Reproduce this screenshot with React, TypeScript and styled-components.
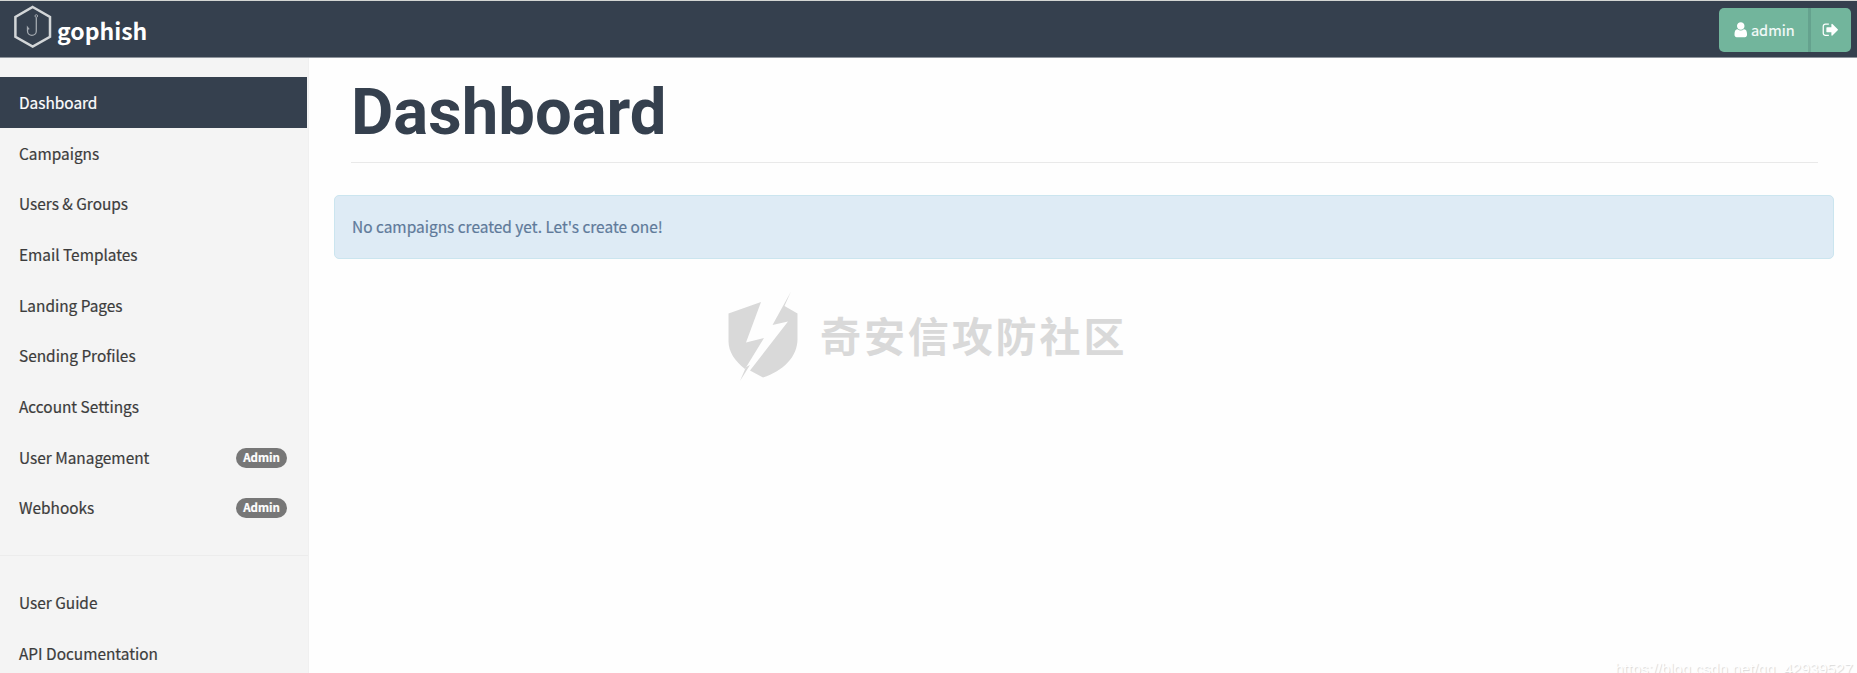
import React from "react";
import styled, { createGlobalStyle } from "styled-components";

const navy = "#35404e";
const sans = `"Noto Sans CJK SC", "Open Sans", sans-serif`;

const GlobalStyle = createGlobalStyle`
  *, *::before, *::after { box-sizing: border-box; }
  html, body, #root { margin: 0; height: 100%; }
  body { background: #fefefe; font-family: ${sans}; overflow: hidden; }
`;

const Page = styled.div`
  position: relative;
  display: flex;
  flex-direction: column;
  height: 673px;
  overflow: hidden;
`;

const Navbar = styled.header`
  flex: none;
  display: flex;
  justify-content: space-between;
  height: 58px;
  padding: 0 6px 0 14px;
  background: ${navy};
  border-top: 1px solid #d3d6d3;
  border-bottom: 1px solid #8e949c;
`;

const Brand = styled.a`
  display: flex;
  color: #fff;
  text-decoration: none;
`;

const Logo = styled.svg`
  display: block;
  width: 38px;
  height: 46px;
  margin-top: 3px;
`;

const BrandName = styled.span`
  margin: 11px 0 0 5px;
  font-size: 23px;
  font-weight: 700;
  line-height: 36px;
`;

const ButtonGroup = styled.div`
  display: flex;
  height: 44px;
  margin-top: 7px;
  border-radius: 5px;
  overflow: hidden;
`;

const NavButton = styled.button<{ $width: number; $divided?: boolean }>`
  display: flex;
  align-items: center;
  justify-content: center;
  gap: 1px;
  width: ${(p) => p.$width}px;
  padding: 0;
  border: 0;
  border-right: ${(p) => (p.$divided ? "3px solid #65a28e" : "0")};
  background: #72b59c;
  color: #f5fbfa;
  font-family: ${sans};
  font-size: 14.6px;
  line-height: 20px;
  -webkit-text-stroke: 0.2px currentColor;
`;

const Glyph = styled.svg`
  display: block;
  width: 17.5px;
  height: 17.5px;
  fill: #fff;
`;

const Body = styled.div`
  flex: 1;
  display: flex;
  min-height: 0;
`;

const Sidebar = styled.nav`
  flex: none;
  width: 309px;
  padding-top: 19px;
  background: #f4f4f4;
  border-right: 1px solid #f0f0f0;
`;

const NavItem = styled.a<{ $active?: boolean }>`
  display: flex;
  align-items: center;
  justify-content: space-between;
  height: 50.7px;
  margin-right: 1px;
  padding: 0 20px 1px 19px;
  background: ${(p) => (p.$active ? navy : "transparent")};
  color: ${(p) => (p.$active ? "#fff" : "#3c3c3c")};
  font-size: 15.4px;
  line-height: 24px;
  text-decoration: none;
  -webkit-text-stroke: 0.2px currentColor;
`;

const Badge = styled.span`
  width: 51px;
  height: 20px;
  margin-top: 2px;
  border-radius: 10px;
  background: #777;
  color: #fff;
  font-size: 11.5px;
  font-weight: 700;
  line-height: 19px;
  text-align: center;
`;

const Divider = styled.hr`
  height: 1px;
  margin: 22px 0 21px;
  border: 0;
  background: #ececec;
`;

const Main = styled.main`
  flex: 1;
  padding: 0 23px 0 25px;
`;

const Title = styled.h1`
  height: 105px;
  margin: 0 16px 32px 17px;
  padding-top: 16px;
  border-bottom: 1px solid #e9e9e9;
  color: ${navy};
  font-family: Roboto, sans-serif;
  font-size: 65.2px;
  font-weight: 700;
  line-height: 76px;
`;

const Alert = styled.div`
  height: 64px;
  padding: 0 17px;
  border: 1px solid #cbe5ef;
  border-radius: 5px;
  background: #deebf5;
  color: #5f7a9a;
  font-size: 15.45px;
  line-height: 61px;
  -webkit-text-stroke: 0.2px currentColor;
`;

const Watermark = styled.div`
  position: absolute;
  left: 728px;
  top: 291px;
  display: flex;
  align-items: center;
  color: #d9d9d9;
  pointer-events: none;
`;

const Shield = styled.svg`
  display: block;
  width: 70px;
  height: 90px;
  fill: currentColor;
`;

const WatermarkText = styled.span`
  margin: 0 0 4px 22px;
  font-size: 41px;
  font-weight: 700;
  line-height: 60px;
  letter-spacing: 2.9px;
  white-space: nowrap;
`;

const SourceUrl = styled.span`
  position: absolute;
  left: 1615px;
  top: 660px;
  color: #fff;
  font-family: "Liberation Sans", sans-serif;
  font-size: 15.5px;
  line-height: 18px;
  text-shadow: 1px 1px 1px #d8d8d8;
  white-space: nowrap;
`;

const links = [
  { label: "Dashboard", active: true },
  { label: "Campaigns" },
  { label: "Users & Groups" },
  { label: "Email Templates" },
  { label: "Landing Pages" },
  { label: "Sending Profiles" },
  { label: "Account Settings" },
  { label: "User Management", badge: "Admin" },
  { label: "Webhooks", badge: "Admin" },
];

const userPath =
  "M1536 1399q0 109-62.5 187t-150.5 78h-854q-88 0-150.5-78t-62.5-187q0-85 8.5-160.5t31.5-152 58.5-131 94-89 134.5-34.5q131 128 313 128t313-128q76 0 134.5 34.5t94 89 58.5 131 31.5 152 8.5 160.5zm-256-887q0 159-112.5 271.5t-271.5 112.5-271.5-112.5-112.5-271.5 112.5-271.5 271.5-112.5 271.5 112.5 112.5 271.5z";
const signOutPath =
  "M704 1440q0 4 1 20t.5 26.5-3 23.5-10 19.5-20.5 6.5h-320q-119 0-203.5-84.5t-84.5-203.5v-704q0-119 84.5-203.5t203.5-84.5h320q13 0 22.5 9.5t9.5 22.5q0 4 1 20t.5 26.5-3 23.5-10 19.5-20.5 6.5h-320q-66 0-113 47t-47 113v704q0 66 47 113t113 47h312l11.5 1 11.5 3 8 5.5 7 9 2 13.5zm928-544q0 26-19 45l-544 544q-19 19-45 19t-45-19-19-45v-288h-448q-26 0-45-19t-19-45v-384q0-26 19-45t45-19h448v-288q0-26 19-45t45-19 45 19l544 544q19 19 19 45z";

export default function App() {
  return (
    <Page>
      <GlobalStyle />
      <Navbar>
        <Brand>
          <Logo viewBox="14 4 38 46" fill="none">
            <path d="M32.7 7 50 17v19.8L32.7 46.6 15.4 36.8V17Z" stroke="#d3d6d8" strokeWidth="2.5" />
            <circle cx="36.3" cy="16" r="1.3" stroke="#a3a9b0" />
            <path d="M36.3 17.5V31a4.4 4.4 0 0 1-8.8 0v-3.6l1.6 2" stroke="#a3a9b0" strokeWidth="1.3" />
          </Logo>
          <BrandName>gophish</BrandName>
        </Brand>
        <ButtonGroup>
          <NavButton $width={92} $divided>
            <Glyph viewBox="0 0 1792 1792"><path d={userPath} /></Glyph>
            admin
          </NavButton>
          <NavButton $width={40} aria-label="Sign out">
            <Glyph viewBox="0 0 1792 1792"><path d={signOutPath} /></Glyph>
          </NavButton>
        </ButtonGroup>
      </Navbar>
      <Body>
        <Sidebar>
          {links.map((l) => (
            <NavItem key={l.label} $active={l.active}>
              {l.label}
              {l.badge && <Badge>{l.badge}</Badge>}
            </NavItem>
          ))}
          <Divider />
          <NavItem>User Guide</NavItem>
          <NavItem>API Documentation</NavItem>
        </Sidebar>
        <Main>
          <Title>Dashboard</Title>
          <Alert>No campaigns created yet. Let's create one!</Alert>
        </Main>
      </Body>
      <Watermark>
        <Shield viewBox="728 291 70 90">
          <path d="M728.5 313.5 761 302 746 342.500 764 338 745 369C735 361 728.500 352 728.500 341Z" />
          <path d="M791 291.500 784.500 306 797.500 313.500V339C797.500 357 783 371 763 377.500L750 370.500 788 321.500 772.500 325Z" />
          <path d="M746 367 740 381 750 365Z" />
        </Shield>
        <WatermarkText>奇安信攻防社区</WatermarkText>
      </Watermark>
      <SourceUrl>https://blog.csdn.net/qq_42939527</SourceUrl>
    </Page>
  );
}
